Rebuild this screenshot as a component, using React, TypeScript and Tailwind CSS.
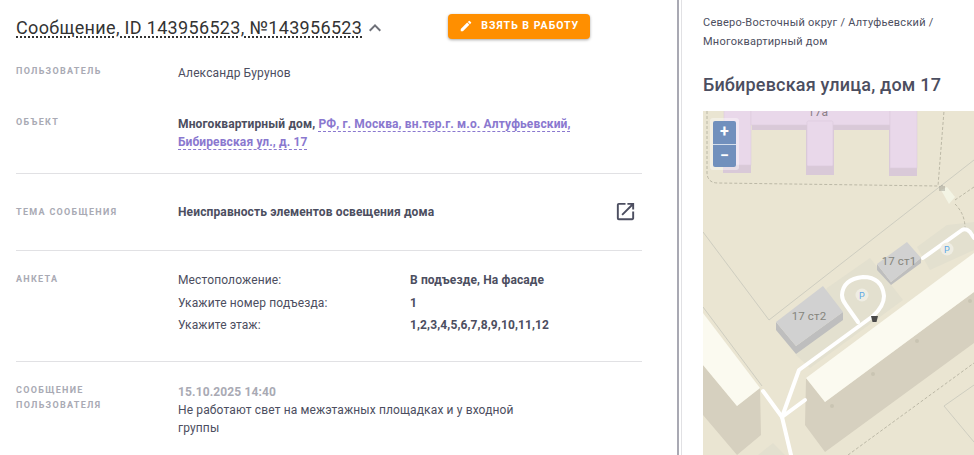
import React from "react";
import { MdEdit, MdExpandLess, MdOpenInNew } from "react-icons/md";

const Label = ({ children }: { children: React.ReactNode }) => (
  <div className="w-[162px] shrink-0 text-[9px] font-bold uppercase leading-[15px] tracking-[1.3px] text-[#a9aab4]">
    {children}
  </div>
);

const answers = [
  ["Местоположение:", "В подъезде, На фасаде"],
  ["Укажите номер подъезда:", "1"],
  ["Укажите этаж:", "1,2,3,4,5,6,7,8,9,10,11,12"],
];

const MapView = () => (
  <svg viewBox="703 111 271 344" className="block h-full w-full">
    <rect x="703" y="111" width="271" height="344" fill="#eae5d2" />

    {/* yards */}
    <polygon points="827,288 870,258 903,300 810,368 796,355" fill="#e3e0cf" />
    <polygon points="917,247 947,225 974,222 974,250 930,270" fill="#e3e0cf" />
    <polygon points="758,455 773,443 785,455" fill="#e3e0cf" />

    {/* thin lines */}
    <g fill="none" stroke="#c6c7bb" strokeWidth="0.8">
      <path d="M974 160 L769 320 L703 232" />
      <path d="M703 307 L762 386" />
      <path d="M974 385 L944 406 L974 442" />
    </g>
    <g fill="none" stroke="#b5b2a0" strokeWidth="0.9" strokeDasharray="3 2">
      <path d="M707 111 V172 Q707 183 718 183 L938 186 L944 111" />
      <path d="M955 204 Q965 214 965 228" />
      <path d="M955 200 L974 187" />
      <path d="M848 455 L974 363" />
    </g>
    <polygon points="941,190 947,187 955,197 949,204" fill="#f3f4e4" />
    <path d="M940 186 v5 M942 185 v6 M944 186 v5" stroke="#8a8a80" strokeWidth="0.8" />

    {/* top building */}
    <g fill="#d9c9d8">
      <rect x="723" y="130" width="28" height="43" />
      <rect x="752" y="120" width="138" height="10" />
      <rect x="806" y="130" width="28" height="45" />
      <rect x="889" y="130" width="28" height="46" />
    </g>
    <g fill="#e9d8ea" stroke="#dccbdc" strokeWidth="0.6">
      <rect x="724" y="105" width="27" height="60" />
      <rect x="751" y="105" width="139" height="20" />
      <rect x="807" y="121" width="26" height="45" rx="1.5" />
      <rect x="890" y="105" width="27" height="63" />
    </g>
    <text x="818" y="116" textAnchor="middle" fontSize="12" fill="#8b8088" fontFamily="Roboto, sans-serif">
      17а
    </text>

    {/* left building */}
    <polygon points="703,365 737,406 760,388 761,435 737,455 703,415" fill="#d6d0bf" />
    <polygon points="703,313 760,388 737,406 703,365" fill="#fbfaf0" />

    {/* long building */}
    <polygon points="806,378 825,402 974,292 974,343 825,452 805,425" fill="#d6d0bf" />
    <polygon points="806,378 974,253 974,292 825,402" fill="#fbfaf0" />
    <g fill="#c9c4b3">
      <circle cx="832" cy="406" r="2" />
      <circle cx="873" cy="374" r="2" />
      <circle cx="917" cy="341" r="2" />
      <circle cx="970" cy="301" r="2" />
    </g>

    {/* roads */}
    <g fill="none" stroke="#ffffff" strokeWidth="4" strokeLinejoin="round" strokeLinecap="round">
      <path d="M782 417 L799 370 L873 316 Q884 306 884 296 Q882 277 863 277 Q843 279 842 295 Q842 300 846 305 L858 322" />
      <path d="M782 417 L805 400" />
      <path d="M763 391 L782 417 L791 455" />
      <path d="M923 258 L962 230 Q966 228 970 232 L974 238" />
    </g>

    {/* small buildings */}
    <polygon points="776,322 776,330 796,354 843,320 843,312 796,346" fill="#bebebe" />
    <polygon points="776,322 823,286 843,312 796,346" fill="#d1d1d1" />
    <polygon points="877,264 877,270 891,285 921,263 921,258 891,282" fill="#bebebe" />
    <polygon points="877,264 907,242 921,258 891,282" fill="#d1d1d1" />
    <g fontSize="11.500" fill="#85857c" fontFamily="Roboto, sans-serif" textAnchor="middle">
      <text x="809" y="320">17 ст2</text>
      <text x="899" y="265">17 ст1</text>
    </g>

    {/* markers */}
    <g fontSize="9" fill="#5ba8e6" fontFamily="Roboto, sans-serif" textAnchor="middle">
      <circle cx="862" cy="295" r="6.5" fill="#efede3" />
      <text x="862" y="298.500">P</text>
      <circle cx="947" cy="249" r="6.5" fill="#efede3" />
      <text x="947" y="252.500">P</text>
    </g>
    <path d="M871 316 h7 l-1.500 6 h-4 z" fill="#4a4a4a" />
  </svg>
);

export default function App() {
  return (
    <div className="flex h-[455px] w-[974px] overflow-hidden bg-white font-['Roboto',sans-serif] text-[12px] tracking-[0.13px] text-[#4c4e60]">
      <div className="w-[677px] shrink-0 pl-4 pr-[35px]">
        <div className="flex h-[54px] items-center pt-[2px]">
          <span className="text-[18px] leading-[22px] tracking-[0.33px] text-[#333] underline decoration-dotted decoration-[2px] underline-offset-[2px]">
            Сообщение, ID 143956523, №143956523
          </span>
          <MdExpandLess className="ml-[1px] text-[#6e7078]" size={24} />
          <button className="ml-[61px] mb-[4px] flex h-[25px] w-[142px] items-center justify-center gap-2 rounded bg-[#ff8f00] text-[10.500px] font-bold uppercase tracking-[1px] text-white shadow-[0_1px_3px_rgba(0,0,0,0.35)]">
            <MdEdit size={14} />
            Взять в работу
          </button>
        </div>

        <div className="flex pt-[10px]">
          <Label>Пользователь</Label>
          <div className="leading-[18px]">Александр Бурунов</div>
        </div>

        <div className="mt-[33px] flex border-b border-[#e1e1e4] pb-[22px]">
          <Label>Объект</Label>
          <div className="w-[410px] font-bold leading-[18px]">
            Многоквартирный дом,{" "}
            <span className="text-[#8a78cf] underline decoration-dashed underline-offset-[3px]">
              РФ, г. Москва, вн.тер.г. м.о. Алтуфьевский, Бибиревская ул., д. 17
            </span>
          </div>
        </div>

        <div className="flex h-[77px] items-center border-b border-[#e1e1e4]">
          <Label>Тема сообщения</Label>
          <div className="font-bold">Неисправность элементов освещения дома</div>
          <MdOpenInNew className="mb-[2px] ml-auto mr-[5px] text-[#4c4e60]" size={23} />
        </div>

        <div className="flex border-b border-[#e1e1e4] pb-[27px] pt-[20px]">
          <div className="pt-px">
            <Label>Анкета</Label>
          </div>
          <div className="grid grid-cols-[232px_1fr] gap-y-[4.500px] leading-[18px]">
            {answers.map(([q, a]) => (
              <React.Fragment key={q}>
                <div>{q}</div>
                <div className="font-bold">{a}</div>
              </React.Fragment>
            ))}
          </div>
        </div>

        <div className="flex pt-[21px]">
          <Label>
            Сообщение
            <br />
            пользователя
          </Label>
          <div className="w-[345px] leading-[18px]">
            <div className="font-bold text-[#a9aab4]">15.10.2025 14:40</div>
            <div>Не работают свет на межэтажных площадках и у входной группы</div>
          </div>
        </div>
      </div>

      <div className="w-[2px] shrink-0 bg-[#a9a9b3]" />
      <div className="ml-[2px] w-[1px] shrink-0 bg-[#e1e1e4]" />

      <div className="flex min-w-0 flex-1 flex-col pl-[21px]">
        <div className="pr-[20px] pt-[13px] text-[11px] leading-[19px] tracking-[0.25px]">
          Северо-Восточный округ / Алтуфьевский / Многоквартирный дом
        </div>
        <div className="mt-[22px] text-[18px] font-medium leading-[24px] tracking-[0.2px]">Бибиревская улица, дом 17</div>
        <div className="relative mt-[14px] min-h-0 flex-1">
          <MapView />
          <div className="absolute left-[7px] top-[7px] rounded-[3px] bg-white/40 p-[3px]">
            <div className="flex h-[46px] w-[23px] flex-col rounded-[2px] bg-[#7190bd] text-white">
              <div className="flex flex-1 items-center justify-center border-b border-white/70 text-[16px] font-bold leading-none">+</div>
              <div className="flex flex-1 items-center justify-center text-[16px] font-bold leading-none">−</div>
            </div>
          </div>
        </div>
      </div>
    </div>
  );
}
